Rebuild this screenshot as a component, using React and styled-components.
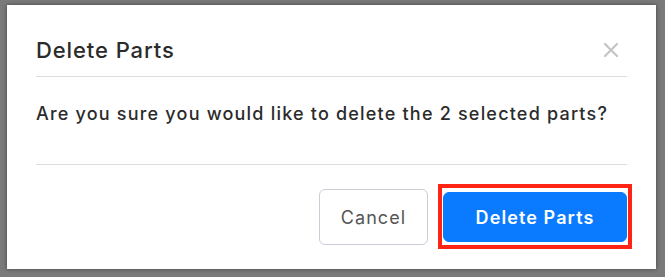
import styled, { createGlobalStyle } from "styled-components"

const GlobalStyle = createGlobalStyle`
	html, body {
		margin: 0;
		padding: 0;
		background: #7a7a7a;
		font-family: Inter, "Noto Sans", "Liberation Sans", sans-serif;
	}
	* {box-sizing: border-box;}
`;

const Backdrop = styled.div`
	width: 665px;
	height: 277px;
	padding: 5px 9px 8px 7px;
`;

const Dialog = styled.div`
	width: 649px;
	height: 264px;
	background: #fff;
	box-shadow: 0 0 4px rgba(0, 0, 0, 0.45);
	display: flex;
	flex-direction: column;
	padding: 0 29px;
`;

const Header = styled.div`
	display: flex;
	justify-content: space-between;
	align-items: center;
	padding: 31px 0 12px;
	border-bottom: 1px solid #dedede;
`;

const Title = styled.h2`
	margin: 0;
	font-size: 22px;
	line-height: 28px;
	font-weight: 500;
	letter-spacing: 0.9px;
	color: #2b2b2b;
`;

const CloseButton = styled.button`
	border: 0;
	background: none;
	padding: 0;
	margin-right: 9px;
	width: 14px;
	height: 14px;
	display: flex;
	cursor: pointer;
`;

const Body = styled.p`
	margin: 0;
	padding: 25px 0 38px;
	font-size: 18px;
	line-height: 24px;
	font-weight: 500;
	letter-spacing: 1.2px;
	color: #2b2b2b;
	border-bottom: 1px solid #dedede;
`;

const Footer = styled.div`
	flex: 1;
	display: flex;
	justify-content: flex-end;
	align-items: center;
	gap: 15px;
`;

const Button = styled.button`
	font-family: inherit;
	font-size: 18px;
	letter-spacing: 1.1px;
	border-radius: 6px;
	cursor: pointer;
	position: relative;
	height: ${({primary}) => primary ? '50px' : '56px'};
	width: ${({primary}) => primary ? '184px' : '109px'};
	border: 1px solid ${({primary}) => primary ? '#0a7aff' : '#c9ced6'};
	background: ${({primary}) => primary ? '#0a7aff' : '#fff'};
	color: ${({primary}) => primary ? '#fff' : '#555'};
	font-weight: ${({primary}) => primary ? 600 : 400};

	${({highlight}) => highlight && `
		&::after {
			content: "";
			position: absolute;
			top: -9px;
			bottom: -8px;
			left: -6px;
			right: -6px;
			border: 4px solid #ff2414;
			pointer-events: none;
		}
	`}
`;

export default function App() {
	return (
		<>
			<GlobalStyle />
			<Backdrop>
				<Dialog>
					<Header>
						<Title>Delete Parts</Title>
						<CloseButton aria-label="Close">
							<svg width="14" height="14" viewBox="0 0 14 14">
								<path d="M1 1 L13 13 M13 1 L1 13" stroke="#c4c4c4" strokeWidth="2.2" strokeLinecap="round" />
							</svg>
						</CloseButton>
					</Header>
					<Body>Are you sure you would like to delete the 2 selected parts?</Body>
					<Footer>
						<Button>Cancel</Button>
						<Button primary highlight>Delete Parts</Button>
					</Footer>
				</Dialog>
			</Backdrop>
		</>
	)
}
